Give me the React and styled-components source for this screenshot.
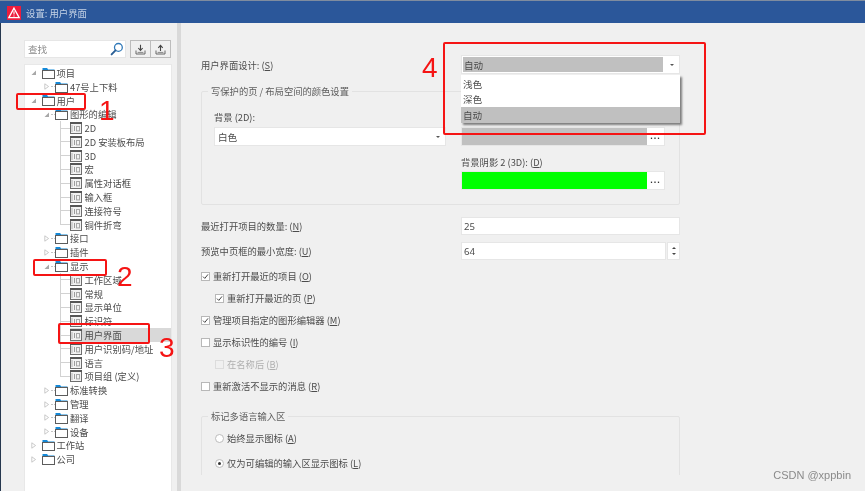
import React from 'react';
import styled, { createGlobalStyle } from 'styled-components';

const GlobalStyle = createGlobalStyle`
  html, body { margin: 0; padding: 0; background: #f0f0f0; }
  * { box-sizing: border-box; }
`;

const FONT = `"Noto Sans CJK SC", "Noto Sans", sans-serif`;

const treeItems = [
  { level: 0, exp: 'open', icon: 'folder', label: '项目' },
  { level: 1, exp: 'closed', icon: 'folder', label: '47号上下料' },
  { level: 0, exp: 'open', icon: 'folder', label: '用户' },
  { level: 1, exp: 'open', icon: 'folder', label: '图形的编辑' },
  { level: 2, icon: 'page', label: '2D' },
  { level: 2, icon: 'page', label: '2D 安装板布局' },
  { level: 2, icon: 'page', label: '3D' },
  { level: 2, icon: 'page', label: '宏' },
  { level: 2, icon: 'page', label: '属性对话框' },
  { level: 2, icon: 'page', label: '输入框' },
  { level: 2, icon: 'page', label: '连接符号' },
  { level: 2, icon: 'page', label: '铜件折弯', last: true },
  { level: 1, exp: 'closed', icon: 'folder', label: '接口' },
  { level: 1, exp: 'closed', icon: 'folder', label: '插件' },
  { level: 1, exp: 'open', icon: 'folder', label: '显示' },
  { level: 2, icon: 'page', label: '工作区域' },
  { level: 2, icon: 'page', label: '常规' },
  { level: 2, icon: 'page', label: '显示单位' },
  { level: 2, icon: 'page', label: '标识符' },
  { level: 2, icon: 'page', label: '用户界面', selected: true },
  { level: 2, icon: 'page', label: '用户识别码/地址' },
  { level: 2, icon: 'page', label: '语言' },
  { level: 2, icon: 'page', label: '项目组 (定义)', last: true },
  { level: 1, exp: 'closed', icon: 'folder', label: '标准转换' },
  { level: 1, exp: 'closed', icon: 'folder', label: '管理' },
  { level: 1, exp: 'closed', icon: 'folder', label: '翻译' },
  { level: 1, exp: 'closed', icon: 'folder', label: '设备' },
  { level: 0, exp: 'closed', icon: 'folder', label: '工作站' },
  { level: 0, exp: 'closed', icon: 'folder', label: '公司' },
];

const marks = [
  { x: 16, y: 93, w: 70, h: 17 },
  { x: 33, y: 259, w: 74, h: 17 },
  { x: 58, y: 323, w: 92, h: 21 },
  { x: 443, y: 42, w: 263, h: 93 },
];

const digits = [
  { x: 99, y: 96, n: '1' },
  { x: 117, y: 262, n: '2' },
  { x: 159, y: 333, n: '3' },
  { x: 422, y: 53, n: '4' },
];

const Page = styled.div`
  position: relative;
  width: 865px;
  height: 491px;
  overflow: hidden;
  display: flex;
  flex-direction: column;
  background: #f0f0f0;
  font-family: ${FONT};
  font-size: 9.3px;
  color: #4c4c4c;
  filter: blur(0.5px);
`;

const TitleBar = styled.div`
  height: 23px;
  flex: none;
  display: flex;
  align-items: center;
  gap: 5px;
  padding: 1px 0 0 7px;
  background: #2b579a;
  border-top: 1px solid #7f8c9f;
  color: #c6d3e6;
  font-size: 9.4px;
`;

const Body = styled.div`
  flex: 1;
  min-height: 0;
  display: flex;
  border-left: 1px solid #26384f;
`;

const Sidebar = styled.aside`
  width: 176px;
  flex: none;
  display: flex;
  flex-direction: column;
  gap: 6px;
  padding: 17px 5px 0 23px;
`;

const SearchRow = styled.div`
  display: flex;
  height: 18px;
  flex: none;
`;

const SearchBox = styled.div`
  width: 102px;
  display: flex;
  align-items: center;
  justify-content: space-between;
  padding: 0 1px 0 3px;
  margin-right: 4px;
  background: #fff;
  border: 1px solid #e6e6e6;
  color: #8a8a8a;
  font-size: 9.6px;
`;

const IconButton = styled.button`
  width: 21px;
  height: 18px;
  padding: 0;
  display: flex;
  align-items: center;
  justify-content: center;
  background: #f0f0f0;
  border: 1px solid #bcbcbc;
  margin-left: ${(p) => (p.$joined ? '-1px' : '0')};
`;

const Tree = styled.div`
  flex: 1;
  background: #fff;
  border: 1px solid #e8e8e8;
  border-bottom: none;
  padding-top: 1px;
  display: flex;
  flex-direction: column;
`;

const TreeRow = styled.div`
  height: 13.8px;
  flex: none;
  display: flex;
  align-items: stretch;
  padding-left: ${(p) => (p.$level === 2 ? 34.5 : 3.5 + p.$level * 13.5)}px;
`;

const Expander = styled.span`
  width: 9px;
  flex: none;
  display: flex;
  align-items: center;
  justify-content: center;
`;

const Stub = styled.span`
  width: 4px;
  flex: none;
  align-self: center;
  border-top: ${(p) => (p.$visible ? '1px dotted #c4c4c4' : 'none')};
`;

const Connector = styled.span`
  width: 10px;
  flex: none;
  background:
    linear-gradient(#d2d2d2, #d2d2d2) left top / 1px ${(p) => (p.$last ? '50%' : '100%')} no-repeat,
    linear-gradient(#d2d2d2, #d2d2d2) left center / 100% 1px no-repeat;
`;

const RowContent = styled.span`
  flex: 1;
  min-width: 0;
  display: flex;
  align-items: center;
  gap: ${(p) => (p.$page ? '3px' : '2px')};
  white-space: nowrap;
  background: ${(p) => (p.$selected ? '#d9d9d9' : 'transparent')};
`;

const Main = styled.main`
  flex: 1;
  min-width: 0;
  border-left: 4px solid #d9d9d9;
`;

const ScrollArea = styled.div`
  height: 452px;
  overflow: hidden;
  padding: 32px 0 0 20px;
`;

const Column = styled.div`
  position: relative;
  width: 479px;
`;

const FieldRow = styled.div`
  display: grid;
  grid-template-columns: 260px 219px;
  align-items: center;
  margin-top: ${(p) => p.$top || 0}px;
`;

const Hotkey = styled.span`
  text-decoration: underline;
  text-underline-offset: 1px;
`;

const Combo = styled.div`
  height: 19px;
  display: flex;
  align-items: stretch;
  background: #fff;
  border: 1px solid #e6e6e6;
`;

const ComboValue = styled.div`
  flex: 1;
  display: flex;
  align-items: center;
  padding-left: ${(p) => (p.$active ? '1px' : '3px')};
  margin: ${(p) => (p.$active ? '1px' : '0')};
  background: ${(p) => (p.$active ? '#c0c0c0' : 'transparent')};
  font-size: 9.6px;
`;

const ComboArrow = styled.div`
  width: 15px;
  flex: none;
  display: flex;
  align-items: center;
  justify-content: center;
  &::after {
    content: '';
    border-left: 2px solid transparent;
    border-right: 2px solid transparent;
    border-top: 2px solid #555;
  }
`;

const DropList = styled.div`
  position: absolute;
  top: 20px;
  left: 260px;
  width: 219px;
  z-index: 2;
  background: #fff;
  box-shadow: 2px 2px 2px #7d7d7d;
  display: flex;
  flex-direction: column;
  padding-top: 1px;
`;

const DropItem = styled.div`
  height: 15.5px;
  display: flex;
  align-items: center;
  padding-left: 2px;
  font-size: 9.6px;
  background: ${(p) => (p.$active ? '#c0c0c0' : 'transparent')};
`;

const Group = styled.fieldset`
  margin: ${(p) => p.$top}px 0 0;
  min-width: 0;
  height: ${(p) => p.$h}px;
  padding: ${(p) => p.$pad};
  border: 1px solid #e2e2e2;
  border-radius: 2px;
`;

const Legend = styled.legend`
  margin-left: -6px;
  padding: 0 3px;
  line-height: 12px;
  color: #5c5c5c;
`;

const ColorGrid = styled.div`
  display: grid;
  grid-template-columns: 232px 204px;
  column-gap: 15px;
`;

const ColorField = styled.div`
  display: flex;
  flex-direction: column;
  gap: ${(p) => p.$gap || 3}px;
  margin-top: ${(p) => p.$top || 0}px;
`;

const FieldLabel = styled.div`
  line-height: 12px;
`;

const ColorPicker = styled.div`
  height: 19px;
  display: flex;
  background: #fff;
  border: 1px solid #e6e6e6;
`;

const Swatch = styled.div`
  flex: 1;
  background: ${(p) => p.$color};
`;

const Ellipsis = styled.div`
  width: 17px;
  flex: none;
  display: flex;
  align-items: center;
  justify-content: center;
  color: #333;
  font: 700 9px/1 "Liberation Sans", sans-serif;
  letter-spacing: 1px;
`;

const TextInput = styled.div`
  height: 18px;
  flex: 1;
  display: flex;
  align-items: center;
  padding-left: 2px;
  background: #fff;
  border: 1px solid #e6e6e6;
  font-family: "Noto Sans", sans-serif;
  font-size: 9.6px;
`;

const Spinner = styled.div`
  display: flex;
  height: 18px;
`;

const SpinButtons = styled.div`
  width: 13px;
  margin-left: 1px;
  flex: none;
  background: #fff;
  border: 1px solid #e6e6e6;
  display: flex;
  flex-direction: column;
  align-items: center;
  justify-content: center;
  gap: 4px;
`;

const Arrow = styled.span`
  border-left: 2px solid transparent;
  border-right: 2px solid transparent;
  ${(p) => (p.$up ? 'border-bottom: 2px solid #444;' : 'border-top: 2px solid #444;')}
`;

const Options = styled.div`
  display: flex;
  flex-direction: column;
  gap: 10px;
  margin-top: 10px;
`;

const OptionRow = styled.div`
  height: 12px;
  display: flex;
  align-items: center;
  gap: 3px;
  white-space: nowrap;
  padding-left: ${(p) => (p.$indent ? '14px' : '0')};
  color: ${(p) => (p.$disabled ? '#b0b0b0' : 'inherit')};
`;

const CheckBox = styled.span`
  width: 9px;
  height: 9px;
  flex: none;
  display: flex;
  align-items: center;
  justify-content: center;
  background: ${(p) => (p.$disabled ? '#f0f0f0' : '#fff')};
  border: 1px solid ${(p) => (p.$disabled ? '#dcdcdc' : '#b8b8b8')};
`;

const Radio = styled.span`
  width: 9px;
  height: 9px;
  flex: none;
  display: flex;
  align-items: center;
  justify-content: center;
  border-radius: 50%;
  background: #fff;
  border: 1px solid #bcbcbc;
  &::after {
    content: '';
    width: 3px;
    height: 3px;
    border-radius: 50%;
    background: ${(p) => (p.$on ? '#333' : 'transparent')};
  }
`;

const RadioList = styled.div`
  display: flex;
  flex-direction: column;
  gap: 13px;
  padding: 10px 0 0 1px;
`;

const Mark = styled.div`
  position: absolute;
  left: ${(p) => p.$x}px;
  top: ${(p) => p.$y}px;
  width: ${(p) => p.$w}px;
  height: ${(p) => p.$h}px;
  border: 2px solid #f51414;
  border-radius: 2px;
  z-index: 5;
`;

const Digit = styled.div`
  position: absolute;
  left: ${(p) => p.$x}px;
  top: ${(p) => p.$y}px;
  z-index: 5;
  color: #f51414;
  font: 28px/30px "Liberation Sans", Arial, sans-serif;
`;

const Watermark = styled.div`
  position: absolute;
  right: 14px;
  bottom: 9px;
  color: #8a8a8a;
  font: 11px/13px "Liberation Sans", Arial, sans-serif;
`;

const WarnIcon = () => (
  <svg width="14" height="14" viewBox="0 0 14 14">
    <rect width="14" height="14" fill="#ee1c3c" />
    <path d="M7 2.2 12.2 11.6H1.8Z" fill="none" stroke="#fff" strokeWidth="1.3" />
    <path d="M7 5.2v3.4M7 9.4v1" stroke="#fff" strokeWidth="1.1" />
  </svg>
);

const SearchIcon = () => (
  <svg width="14" height="14" viewBox="0 0 14 14" fill="none">
    <circle cx="8.4" cy="5.4" r="3.9" stroke="#2f78b8" strokeWidth="1.3" />
    <path d="M5.5 8.3 1.6 12.4" stroke="#2a5f96" strokeWidth="1.9" strokeLinecap="round" />
  </svg>
);

const TrayIcon = ({ up }) => (
  <svg width="11" height="11" viewBox="0 0 11 11" fill="none">
    <path d="M1 6.5v3.5h9V6.5" stroke="#666" strokeWidth="1" />
    <path d="M2.6 8.4h5.8" stroke="#888" strokeWidth="1" />
    {up ? (
      <path d="M5.5 7V1.6M3.3 3.8l2.2-2.4 2.2 2.4" stroke="#444" strokeWidth="1.1" />
    ) : (
      <path d="M5.5 .8v5.4M3.3 4l2.2 2.4L7.7 4" stroke="#444" strokeWidth="1.1" />
    )}
  </svg>
);

const ExpanderIcon = ({ open }) => (
  <svg width="7" height="7" viewBox="0 0 7 7">
    {open ? (
      <path d="M6 1.5V6H1.5Z" fill="#a8a8a8" />
    ) : (
      <path d="M1.8 .8 5.6 3.5 1.8 6.2Z" fill="#fff" stroke="#bdbdbd" strokeWidth=".8" />
    )}
  </svg>
);

const FolderIcon = () => (
  <svg width="13" height="12" viewBox="0 0 13 12" style={{ flex: 'none' }}>
    <path d="M.5 3V1h4.6l1 1.5h6.4V4H.5Z" fill="#1589d8" />
    <rect x=".5" y="3.5" width="12" height="8" fill="#fff" stroke="#5c5c5c" />
  </svg>
);

const PageIcon = () => (
  <svg width="12" height="12" viewBox="0 0 12 12" style={{ flex: 'none' }}>
    <rect x=".5" y=".5" width="11" height="11" fill="#f2f2f2" stroke="#6e6e6e" />
    <rect x="0" y="0" width="12" height="2" fill="#565656" />
    <path d="M2 3v7" stroke="#b4b4b4" />
    <path d="M4.5 4v5" stroke="#9c9c9c" />
    <rect x="6.5" y="4.5" width="3" height="4.4" fill="none" stroke="#a8a8a8" />
  </svg>
);

const Check = () => (
  <svg width="7" height="7" viewBox="0 0 7 7" fill="none">
    <path d="M1 3.6 2.8 5.4 6 1.4" stroke="#444" strokeWidth="1" />
  </svg>
);

const Label = ({ text, hotkey }) => (
  <span>
    {text} (<Hotkey>{hotkey}</Hotkey>)
  </span>
);

const Option = ({ text, hotkey, checked, indent, disabled }) => (
  <OptionRow $indent={indent} $disabled={disabled}>
    <CheckBox $disabled={disabled}>{checked && <Check />}</CheckBox>
    <Label text={text} hotkey={hotkey} />
  </OptionRow>
);

const TreeItem = ({ item }) => (
  <TreeRow $level={item.level}>
    {item.level === 2 ? (
      <Connector $last={item.last} />
    ) : (
      <>
        <Expander>
          <ExpanderIcon open={item.exp === 'open'} />
        </Expander>
        <Stub $visible={item.level === 1} />
      </>
    )}
    <RowContent $page={item.icon === 'page'} $selected={item.selected}>
      {item.icon === 'page' ? <PageIcon /> : <FolderIcon />}
      {item.label}
    </RowContent>
  </TreeRow>
);

export default function App() {
  return (
    <Page>
      <GlobalStyle />
      <TitleBar>
        <WarnIcon />
        设置: 用户界面
      </TitleBar>
      <Body>
        <Sidebar>
          <SearchRow>
            <SearchBox>
              查找
              <SearchIcon />
            </SearchBox>
            <IconButton>
              <TrayIcon />
            </IconButton>
            <IconButton $joined>
              <TrayIcon up />
            </IconButton>
          </SearchRow>
          <Tree>
            {treeItems.map((item, i) => (
              <TreeItem key={i} item={item} />
            ))}
          </Tree>
        </Sidebar>
        <Main>
          <ScrollArea>
            <Column>
              <FieldRow>
                <Label text="用户界面设计:" hotkey="S" />
                <Combo>
                  <ComboValue $active>自动</ComboValue>
                  <ComboArrow />
                </Combo>
              </FieldRow>
              <DropList>
                <DropItem>浅色</DropItem>
                <DropItem>深色</DropItem>
                <DropItem $active>自动</DropItem>
              </DropList>

              <Group $top={11} $h={120} $pad="14px 14px 0 12px">
                <Legend>写保护的页 / 布局空间的颜色设置</Legend>
                <ColorGrid>
                  <ColorField $gap={4}>
                    <FieldLabel>背景 (2D):</FieldLabel>
                    <Combo>
                      <ComboValue>白色</ComboValue>
                      <ComboArrow />
                    </Combo>
                  </ColorField>
                  <div>
                    <ColorField $gap={4}>
                      <FieldLabel>
                        <Label text="背景阴影 1 (3D):" hotkey="B" />
                      </FieldLabel>
                      <ColorPicker>
                        <Swatch $color="#c0c0c0" />
                        <Ellipsis>...</Ellipsis>
                      </ColorPicker>
                    </ColorField>
                    <ColorField $top={10}>
                      <FieldLabel>
                        <Label text="背景阴影 2 (3D):" hotkey="D" />
                      </FieldLabel>
                      <ColorPicker>
                        <Swatch $color="#00ff00" />
                        <Ellipsis>...</Ellipsis>
                      </ColorPicker>
                    </ColorField>
                  </div>
                </ColorGrid>
              </Group>

              <FieldRow $top={12}>
                <Label text="最近打开项目的数量:" hotkey="N" />
                <TextInput>25</TextInput>
              </FieldRow>
              <FieldRow $top={7}>
                <Label text="预览中页框的最小宽度:" hotkey="U" />
                <Spinner>
                  <TextInput>64</TextInput>
                  <SpinButtons>
                    <Arrow $up />
                    <Arrow />
                  </SpinButtons>
                </Spinner>
              </FieldRow>

              <Options>
                <Option text="重新打开最近的项目" hotkey="O" checked />
                <Option text="重新打开最近的页" hotkey="P" checked indent />
                <Option text="管理项目指定的图形编辑器" hotkey="M" checked />
                <Option text="显示标识性的编号" hotkey="I" />
                <Option text="在名称后" hotkey="B" indent disabled />
                <Option text="重新激活不显示的消息" hotkey="R" />
              </Options>

              <Group $top={18} $h={120} $pad="0 14px 0 12px">
                <Legend>标记多语言输入区</Legend>
                <RadioList>
                  <OptionRow>
                    <Radio />
                    <Label text="始终显示图标" hotkey="A" />
                  </OptionRow>
                  <OptionRow>
                    <Radio $on />
                    <Label text="仅为可编辑的输入区显示图标" hotkey="L" />
                  </OptionRow>
                </RadioList>
              </Group>
            </Column>
          </ScrollArea>
        </Main>
      </Body>
      {marks.map((m, i) => (
        <Mark key={i} $x={m.x} $y={m.y} $w={m.w} $h={m.h} />
      ))}
      {digits.map((d) => (
        <Digit key={d.n} $x={d.x} $y={d.y}>
          {d.n}
        </Digit>
      ))}
      <Watermark>CSDN @xppbin</Watermark>
    </Page>
  );
}
